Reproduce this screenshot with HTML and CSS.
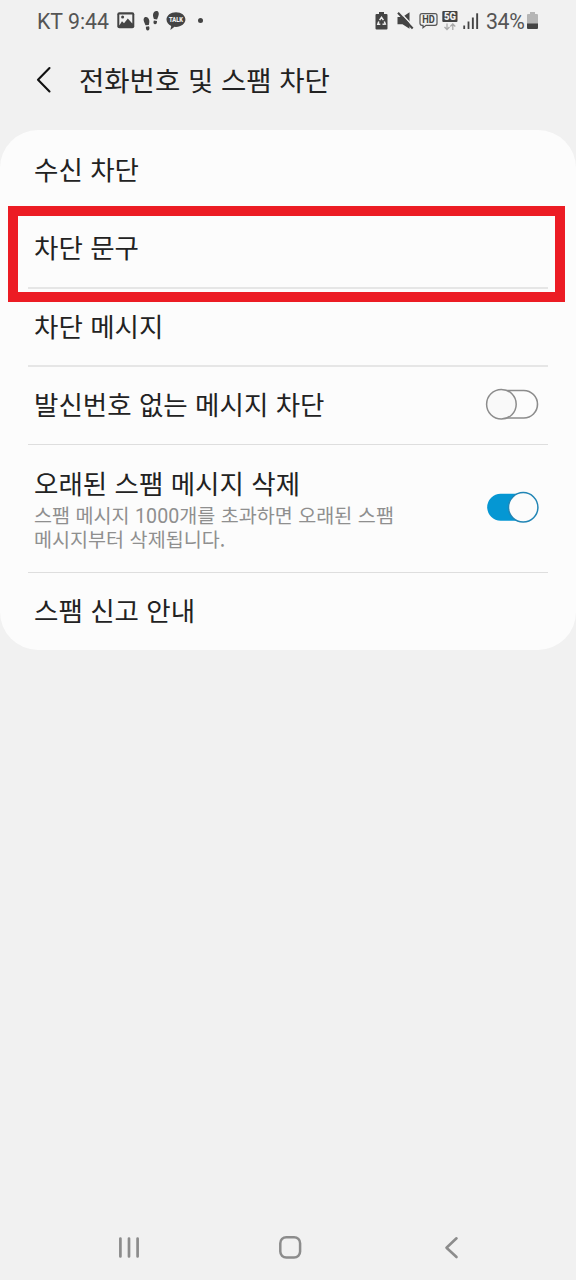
FILE: index.html
```
<!DOCTYPE html>
<html lang="ko">
<head>
<meta charset="utf-8">
<title>전화번호 및 스팸 차단</title>
<link rel="stylesheet" href="styles.css">
</head>
<body>
<div class="screen">
  <div class="status">
    <div class="status-left">
      <span class="carrier">KT 9:44</span>
      <svg class="ic-photo" width="18" height="17" viewBox="0 0 18 17"><rect x=".3" y=".3" width="17" height="16" rx="2" fill="#444"/><path d="M2.3 13.5V2.4h13v9.2l-4.5-5-3.8 4.6-2-2z" fill="#f1f1f1"/><circle cx="5.6" cy="5" r="1.5" fill="#444"/></svg>
      <svg class="ic-steps" width="17" height="21" viewBox="0 0 17 21" fill="#444"><path d="M1.400 6.500C3.500 5 6 7 6.300 9.700c.1 1.800-.2 2.700-.5 4.200l-3.300.4C1.700 11.800-.6 8.800 1.400 6.500zM2.900 15.700l3.100-.4c.9 2.100.5 3.900-1 4.200s-2.300-1.500-2.100-3.800z"/><path d="M15 .5c-2.300-1.400-4.800.6-5 3.300-.1 1.700.5 2.700.9 4.300l3.200.4C14.700 6.300 17 3 15 .5zM14 10l-3.100-.5c-.8 1.800-.5 3.500.9 3.800s2.400-1.100 2.200-3.300z"/></svg>
      <svg class="ic-talk" width="20" height="19" viewBox="0 0 20 19"><path d="M10 .3c5.300 0 9.400 3.200 9.400 7.200s-4.100 7.400-9.400 7.400l-1.500-.1L4.400 18l.8-4.100C2.400 12.700.5 10.400.5 7.500.5 3.500 4.700.3 10 .3z" fill="#444"/><text x="10" y="9.900" text-anchor="middle" textLength="14" lengthAdjust="spacingAndGlyphs" class="talk-text">TALK</text></svg>
      <span class="dot"></span>
    </div>
    <div class="status-right">
      <svg class="ic-saver" width="13" height="18" viewBox="0 0 13 18"><path d="M4 0h5v2h2.500q1 0 1 1v13.500q0 1-1 1h-10q-1 0-1-1V3q0-1 1-1H4z" fill="#444"/><path d="M4.600 8.100 6.500 5.300l1.900 2.800M9.300 9.400l1 2.600-2.800.2M5.300 12.300H2.800l1-2.800" fill="none" stroke="#f1f1f1" stroke-width="1.500"/></svg>
      <svg class="ic-mute" width="17" height="18" viewBox="0 0 17 18"><path d="M.5 5h5L12.500.3v16.400L5.500 12.200h-5z" fill="#444"/><path d="m2.400-.5 14.500 15.500" stroke="#f1f1f1" stroke-width="1.500"/><path d="m1 .8 14.700 15.700" stroke="#444" stroke-width="2.100"/></svg>
      <svg class="ic-hd" width="19" height="16" viewBox="0 0 19 16"><path d="M3 .7h13q2 0 2 2v7.600q0 2-2 2H7l-3 2.500v-2.500H3q-2 0-2-2V2.700q0-2 2-2z" fill="none" stroke="#555" stroke-width="1.200"/><text x="9.500" y="10" text-anchor="middle" textLength="12.500" lengthAdjust="spacingAndGlyphs" class="hd-text">HD</text></svg>
      <svg class="ic-5g" width="16" height="20" viewBox="0 0 16 20"><rect x=".3" width="15.200" height="11" rx="1" fill="#444"/><text x="8" y="9.400" text-anchor="middle" textLength="12" lengthAdjust="spacingAndGlyphs" class="g-text">5G</text><path d="M5 12.500v6M2.500 16 5 18.500 7.500 16M10.800 19v-6M8.300 15.500l2.500-2.500 2.500 2.500" fill="none" stroke="#aaa" stroke-width="1.300"/></svg>
      <svg class="ic-signal" width="16" height="16" viewBox="0 0 16 16" fill="#444"><rect x=".3" y="12.500" width="1.800" height="3.500"/><rect x="4.600" y="8.500" width="1.800" height="7.500"/><rect x="8.900" y="4.500" width="1.900" height="11.500"/><rect x="13.200" y=".3" width="1.900" height="15.700"/></svg>
      <span class="percent">34%</span>
      <svg class="ic-batt" width="11" height="17" viewBox="0 0 11 17"><path d="M3 0h5v2h2q1 0 1 1v9H0V3q0-1 1-1h2z" fill="#b5b5b5"/><path d="M0 11.500h11V16q0 1-1 1H1q-1 0-1-1z" fill="#444"/></svg>
    </div>
  </div>
  <header class="header">
    <svg class="back" width="16" height="28" viewBox="0 0 16 28"><path d="M13.500 2 2 13.700 13.500 25.500" fill="none" stroke="#111" stroke-width="2.100" stroke-linecap="round" stroke-linejoin="round"/></svg>
    <h1 class="title">전화번호 및 스팸 차단</h1>
  </header>
  <main class="card">
    <div class="row first"><span class="label">수신 차단</span></div>
    <div class="row lined marked"><span class="label">차단 문구</span></div>
    <div class="row lined short"><span class="label">차단 메시지</span></div>
    <div class="row lined thin short"><span class="label">발신번호 없는 메시지 차단</span>
      <svg class="toggle" width="56" height="34" viewBox="0 0 56 34"><rect x="5" y="3.500" width="48.500" height="27.500" rx="13.750" fill="#fcfcfc" stroke="#8c8c8c" stroke-width="1.600"/><circle cx="17.400" cy="17.200" r="14.800" fill="#f9f9f9" stroke="#8c8c8c" stroke-width="1.500"/></svg>
    </div>
    <div class="row lined thin tall">
      <div class="texts"><span class="label">오래된 스팸 메시지 삭제</span><span class="sub">스팸 메시지 <span class="digits">1000</span>개를 초과하면 오래된 스팸</span><span class="sub">메시지부터 삭제됩니다.</span></div>
      <svg class="toggle" width="56" height="34" viewBox="0 0 56 34"><rect x="3.200" y="3.700" width="50" height="27" rx="13.500" fill="#0597d3"/><circle cx="39.200" cy="17.300" r="14.700" fill="#fcfcfc" stroke="#2185b5" stroke-width="1.500"/></svg>
    </div>
    <div class="row last"><span class="label">스팸 신고 안내</span></div>
  </main>
  <nav class="nav">
    <svg width="24" height="24" viewBox="0 0 24 24"><path d="M3.400 3.500v18M12 3.500v18M20.600 3.500v18" stroke="#8c8c8c" stroke-width="2.700" stroke-linecap="round"/></svg>
    <svg width="24" height="24" viewBox="0 0 24 24"><rect x="1.300" y="2.200" width="19.800" height="20.400" rx="6" fill="none" stroke="#8c8c8c" stroke-width="2.500"/></svg>
    <svg width="24" height="24" viewBox="0 0 24 24"><path d="M16.500 3.300 6.500 12.700l10 9.300" fill="none" stroke="#8c8c8c" stroke-width="2.600" stroke-linecap="round" stroke-linejoin="round"/></svg>
  </nav>
</div>
</body>
</html>
```
FILE: styles.css
```
*, *::after { box-sizing: border-box; }
body { margin: 0; background: #f1f1f1; font-family: "Noto Sans CJK KR", sans-serif; color: #222; }
svg { display: block; flex: none; overflow: visible; }
.screen { width: 576px; height: 1280px; display: flex; flex-direction: column; overflow: hidden; }
.status { height: 42px; display: flex; justify-content: space-between; padding: 0 38px 0 37px; font-family: Roboto, sans-serif; font-size: 21.3px; color: #555; }
.status-left, .status-right { display: flex; align-items: flex-start; white-space: nowrap; }
.carrier, .percent { line-height: 26px; margin-top: 9px; }
.carrier { width: 80px; }
.ic-photo { margin-top: 12px; }
.ic-steps { margin: 11px 0 0 8px; }
.ic-talk { margin: 12px 0 0 6px; }
.dot { width: 5px; height: 5px; border-radius: 50%; background: #444; margin: 18px 0 0 12px; }
.talk-text { font: 900 6.5px Roboto, sans-serif; fill: #f1f1f1; }
.hd-text { font: 700 10px Roboto, sans-serif; fill: #444; }
.g-text { font: 900 10.5px Roboto, sans-serif; fill: #f1f1f1; }
.ic-saver { margin: 12px 9px 0 0; }
.ic-mute { margin: 12px 5px 0 0; }
.ic-hd { margin: 13px 4px 0 0; }
.ic-5g { margin: 11px 5px 0 0; }
.ic-signal { margin: 13px 7px 0 0; }
.percent { width: 41px; letter-spacing: -.4px; }
.ic-batt { margin-top: 12px; }
.header { height: 88px; display: flex; align-items: flex-start; padding-left: 36px; }
.back { margin: 24px 27px 0 0; }
.title { margin: 16px 0 0; font-size: 27.5px; line-height: 42px; font-weight: 400; white-space: nowrap; }
.card { height: 520px; border-radius: 38px; background: #fcfcfc; }
.row { position: relative; height: 79px; display: flex; align-items: center; justify-content: space-between; margin: 0 28px; padding: 0 8px 3px 6px; }
.first { height: 80px; }
.lined { border-bottom: 2px solid #e6e6e6; }
.thin { border-bottom: 1px solid #dedede; }
.label { font-size: 26.5px; line-height: 40px; white-space: nowrap; }
.short { height: 78px; }
.tall { height: 128px; }
.last { height: 77px; }
.texts { display: flex; flex-direction: column; }
.texts .label { line-height: 40px; }
.sub { font-size: 19.6px; line-height: 24px; color: #8f8f8f; white-space: nowrap; }
.digits { font-family: Roboto, sans-serif; line-height: 1; }
/* highlight frame around the blocked-phrases row */
.marked::after { content: ""; position: absolute; left: -20px; top: -4px; width: 557px; height: 96px; border: 10px solid #ec1c24; z-index: 1; }
.nav { margin-top: auto; height: 66px; display: flex; justify-content: space-between; padding: 21px 112px 0 117px; }
```
